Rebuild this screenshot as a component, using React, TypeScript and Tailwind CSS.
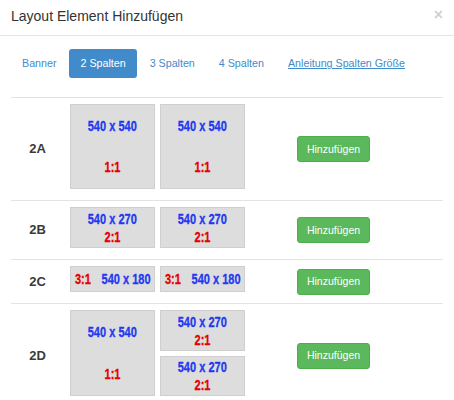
import React from "react";

type Box = { w: number; h: number; size: string; ratio: string; inline?: boolean; spread?: boolean };

const font = { fontFamily: '"Liberation Sans", Arial, sans-serif' };

function Cell({ box }: { box: Box }) {
  if (box.inline) {
    return (
      <div
        className="flex items-center justify-center border border-[#cfcfcf] bg-[#dddddd]"
        style={{ width: box.w, height: box.h }}
      >
        <div className="flex shrink-0 scale-x-[0.76] gap-[14px] whitespace-nowrap text-[14.5px] font-bold leading-[16px] [-webkit-text-stroke:0.3px]">
          <span className="text-[#e60000]">{box.ratio}</span>
          <span className="text-[#2238f0]">{box.size}</span>
        </div>
      </div>
    );
  }
  return (
    <div
      className={
        "flex flex-col items-center border border-[#cfcfcf] bg-[#dddddd] text-[14.5px] font-bold [-webkit-text-stroke:0.3px] " +
        (box.spread ? "justify-between py-[13px] leading-[16px]" : "justify-center leading-[18px]")
      }
      style={{ width: box.w, height: box.h }}
    >
      <span className="scale-x-[0.76] whitespace-nowrap text-[#2238f0]">{box.size}</span>
      <span className="scale-x-[0.76] whitespace-nowrap text-[#e60000]">{box.ratio}</span>
    </div>
  );
}

const square: Box = { w: 85, h: 85, size: "540 x 540", ratio: "1:1", spread: true };
const half: Box = { w: 85, h: 41, size: "540 x 270", ratio: "2:1" };
const third: Box = { w: 85, h: 26, size: "540 x 180", ratio: "3:1", inline: true };

function AddButton() {
  return (
    <button className="h-[26px] w-[73px] rounded-[3px] border border-[#4cae4c] bg-[#5cb85c] text-[10.5px] leading-[15px] text-white">
      Hinzufügen
    </button>
  );
}

function Row({ label, children }: { label: string; children: React.ReactNode }) {
  return (
    <div className="flex items-center border-t border-[#e3e3e3]">
      <div className="w-[53px] text-center text-[13px] font-bold text-[#3a3a3a]">{label}</div>
      <div className="w-[187px] px-[6px] pt-[6px] pb-[6px]">{children}</div>
      <div className="pl-[46px]">
        <AddButton />
      </div>
    </div>
  );
}

export default function App() {
  const tabs = ["Banner", "2 Spalten", "3 Spalten", "4 Spalten"];
  return (
    <div className="h-[400px] w-[454px] overflow-hidden bg-white" style={font}>
      <div className="relative flex items-center border-b border-[#e5e5e5] px-[11px] pt-[6px] pb-[9px]">
        <h4 className="text-[14px] leading-[20px] text-[#333]">Layout Element Hinzufügen</h4>
        <span className="absolute right-[11px] top-[5px] text-[16px] font-bold leading-[20px] text-black/20">×</span>
      </div>
      <div className="px-[11px] pt-[13px]">
        <div className="flex gap-[2px]">
          {tabs.map((t, i) => (
            <span
              key={t}
              className={
                "rounded-[3px] px-[11px] py-[7px] text-[10.7px] leading-[15px] " +
                (i === 1 ? "bg-[#428bca] text-white" : "text-[#428bca]")
              }
            >
              {t}
            </span>
          ))}
          <span className="px-[11px] py-[7px] text-[10.7px] leading-[15px] text-[#428bca] underline">
            Anleitung Spalten Größe
          </span>
        </div>
        <div className="mt-[19px]">
          <Row label="2A">
            <div className="flex gap-[5px]">
              <div className="mb-[5px]"><Cell box={square} /></div>
              <div className="mb-[5px]"><Cell box={square} /></div>
            </div>
          </Row>
          <Row label="2B">
            <div className="flex gap-[5px]">
              <div className="mb-[5px]"><Cell box={half} /></div>
              <div className="mb-[5px]"><Cell box={half} /></div>
            </div>
          </Row>
          <Row label="2C">
            <div className="flex gap-[5px]">
              <div className="mb-[5px]"><Cell box={third} /></div>
              <div className="mb-[5px]"><Cell box={third} /></div>
            </div>
          </Row>
          <Row label="2D">
            <div className="flex gap-[5px]">
              <div className="mb-[5px]"><Cell box={{ ...square, h: 86 }} /></div>
              <div className="flex flex-col gap-[5px]">
                <Cell box={half} />
                <Cell box={{ ...half, h: 40 }} />
              </div>
            </div>
          </Row>
        </div>
      </div>
    </div>
  );
}
